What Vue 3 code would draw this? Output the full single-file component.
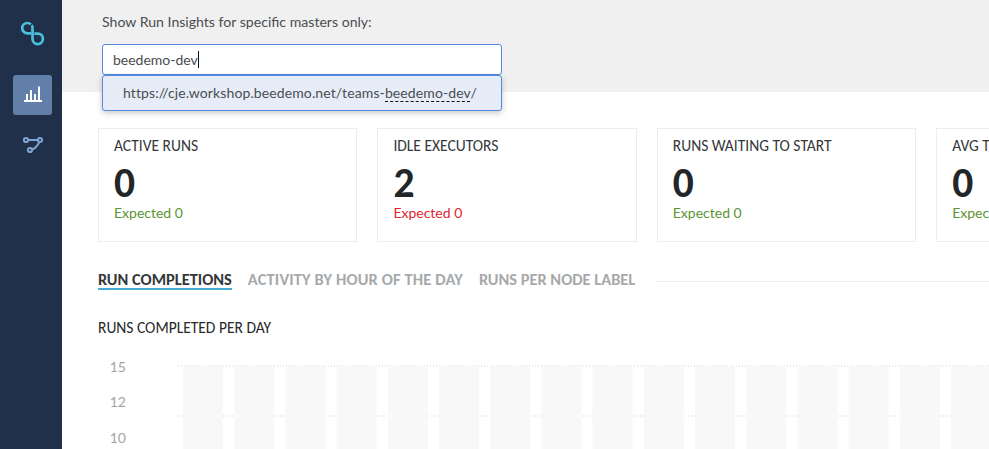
<script setup>
const cards = [
  { title: 'ACTIVE RUNS', value: 0, expected: 0, ok: true },
  { title: 'IDLE EXECUTORS', value: 2, expected: 0, ok: false },
  { title: 'RUNS WAITING TO START', value: 0, expected: 0, ok: true },
  { title: 'AVG TIME WAITING', value: 0, expected: 0, ok: true },
]
const bars = Array.from({ length: 16 }, (_, i) => 5 + i * 51.2)
const gridLines = [1, 51, 99]
const ticks = [15, 12, 10]
</script>

<template>
  <div class="page">
    <nav class="sidebar">
      <svg class="logo" width="27" height="26" viewBox="0 0 27 26">
        <path d="M11.900 4.300C10.900 3.400 9.700 3 8.500 3 5.500 3 3.200 5.200 3.200 8s2.300 5.400 5.300 5.400H12" />
        <path d="M12.700 5.200c.5.600.8 1.400.8 2.600v10.900c0 3 2.300 5.400 5.200 5.400s5.200-2.400 5.200-5.400-2.300-5.100-5.200-5.100h-3.400" />
      </svg>
      <a class="nav-item active">
        <svg width="19" height="18" viewBox="0 0 19 18">
          <path d="M1 15h18M4 15V8M8 15V4M12 15V8M16 15V.500" />
        </svg>
      </a>
      <a class="nav-item">
        <svg class="flow" width="21" height="18" viewBox="0 0 21 18">
          <path d="M6.200 4h9.600M17.400 6C15.500 9.700 13.200 12.500 10.100 13.500" />
          <circle cx="4" cy="4" r="2.100" />
          <circle cx="18" cy="4" r="2.100" />
          <circle cx="8" cy="14" r="2.100" />
        </svg>
      </a>
    </nav>

    <main class="main">
      <header class="filter">
        <label class="filter-label">Show Run Insights for specific masters only:</label>
        <div class="combo">
          <div class="input"><span>beedemo-dev</span><i class="caret"></i></div>
          <div class="option">
            <span>https://cje.workshop.beedemo.net/teams-<span class="match">beedemo-dev</span>/</span>
          </div>
        </div>
      </header>

      <section class="cards">
        <article v-for="c in cards" :key="c.title" class="card">
          <h3>{{ c.title }}</h3>
          <strong>{{ c.value }}</strong>
          <p :class="c.ok ? 'ok' : 'bad'">Expected {{ c.expected }}</p>
        </article>
      </section>

      <div class="tabs">
        <a class="tab current">RUN COMPLETIONS</a>
        <a class="tab hour">ACTIVITY BY HOUR OF THE DAY</a>
        <a class="tab">RUNS PER NODE LABEL</a>
        <span class="rule"></span>
      </div>

      <h2>RUNS COMPLETED PER DAY</h2>
      <div class="chart">
        <div class="axis"><span v-for="t in ticks" :key="t">{{ t }}</span></div>
        <svg class="plot" width="811" height="84" viewBox="0 0 811 84">
          <line v-for="y in gridLines" :key="y" x1="0" x2="811" :y1="y" :y2="y" />
          <rect v-for="x in bars" :key="x" :x="x" y="1" width="40" height="98" />
        </svg>
      </div>
    </main>
  </div>
</template>

<style>
body { overflow: hidden; }
</style>

<style scoped>
* { box-sizing: border-box; }
.page {
  display: flex;
  width: 989px;
  height: 449px;
  overflow: hidden;
  background: #fff;
  font-family: Lato, "Liberation Sans", sans-serif;
  font-size: 14px;
  line-height: 20px;
  color: #343739;
}
.sidebar {
  flex: none;
  display: flex;
  flex-direction: column;
  align-items: center;
  width: 62px;
  padding: 20px 0 0 3px;
  background: #21304a;
}
.logo { flex: none; margin-bottom: 29px; }
.logo path { fill: none; stroke: #4cbfdb; stroke-width: 2.700; }
.nav-item {
  display: flex;
  align-items: center;
  justify-content: center;
  width: 39px;
  height: 40px;
  margin-bottom: 10px;
  border-radius: 3px;
}
.nav-item path { fill: none; stroke: #fff; stroke-width: 2; }
.nav-item.active { background: #617fa8; }
.flow circle, .nav-item .flow path { fill: none; stroke: #7fa3d2; stroke-width: 2; }
.main { flex: 1; min-width: 0; overflow: hidden; }
.filter {
  height: 92px;
  padding: 12px 40px 0;
  background: #f0f0f0;
  color: #4a4d50;
}
.filter-label { display: block; height: 32px; font-size: 14.100px; }
.combo { position: relative; width: 400px; }
.input {
  display: flex;
  align-items: center;
  height: 31px;
  padding-left: 10px;
  border: 1px solid #568ade;
  border-radius: 3px;
  background: #fff;
}
.caret { width: 1px; height: 17px; background: #111; }
.option {
  position: relative;
  height: 36px;
  padding: 7px 20px;
  border: 1px solid #568ade;
  border-radius: 3px;
  background: #e6edf8;
  box-shadow: 0 2px 6px rgba(0, 0, 0, 0.220);
  letter-spacing: 0.110px;
  white-space: nowrap;
}
.match { border-bottom: 1px dashed #111; }
.cards {
  display: grid;
  grid-template-columns: repeat(4, 259.400px);
  gap: 20px;
  padding: 36px 0 0 36px;
}
.card {
  height: 114px;
  padding: 7px 15px;
  border: 1px solid #ededed;
  white-space: nowrap;
}
h2, h3, p { margin: 0; font-size: 14px; font-weight: 400; }
h2, h3 { font-family: Carlito, Lato, sans-serif; font-size: 15.500px; }
.card strong {
  display: block;
  height: 46px;
  font-family: Carlito, Lato, sans-serif;
  font-size: 41.500px;
  line-height: 54px;
  color: #222628;
}
.card p { line-height: 22px; }
.ok { color: #5b9432; }
.bad { color: #e1262f; }
.tabs {
  display: flex;
  height: 48px;
  padding: 28px 0 0 36px;
  font-family: Carlito, Lato, sans-serif;
  font-size: 16.400px;
  line-height: 18px;
  white-space: nowrap;
}
.tab { height: 20px; margin-right: 16px; color: #a6a9ab; font-weight: 700; }
.tab.current { border-bottom: 2px solid #47acd5; color: #343739; }
.tab.hour { letter-spacing: 0.160px; }
.rule { flex: 1; height: 1px; margin: 11px 0 0 5px; background: #ececec; }
h2 { height: 48px; padding: 28px 0 0 36px; color: #26292b; }
.chart { display: flex; height: 100px; padding-top: 27px; }
.axis {
  width: 64px;
  margin: -8px 52px 0 0;
  text-align: right;
  color: #a2a5a8;
}
.axis span { display: block; height: 35.300px; }
.plot { flex: none; }
.plot line { stroke: #e6e6e6; stroke-width: 2; stroke-dasharray: 1 2; }
.plot rect { fill: #f8f8f8; }
</style>
